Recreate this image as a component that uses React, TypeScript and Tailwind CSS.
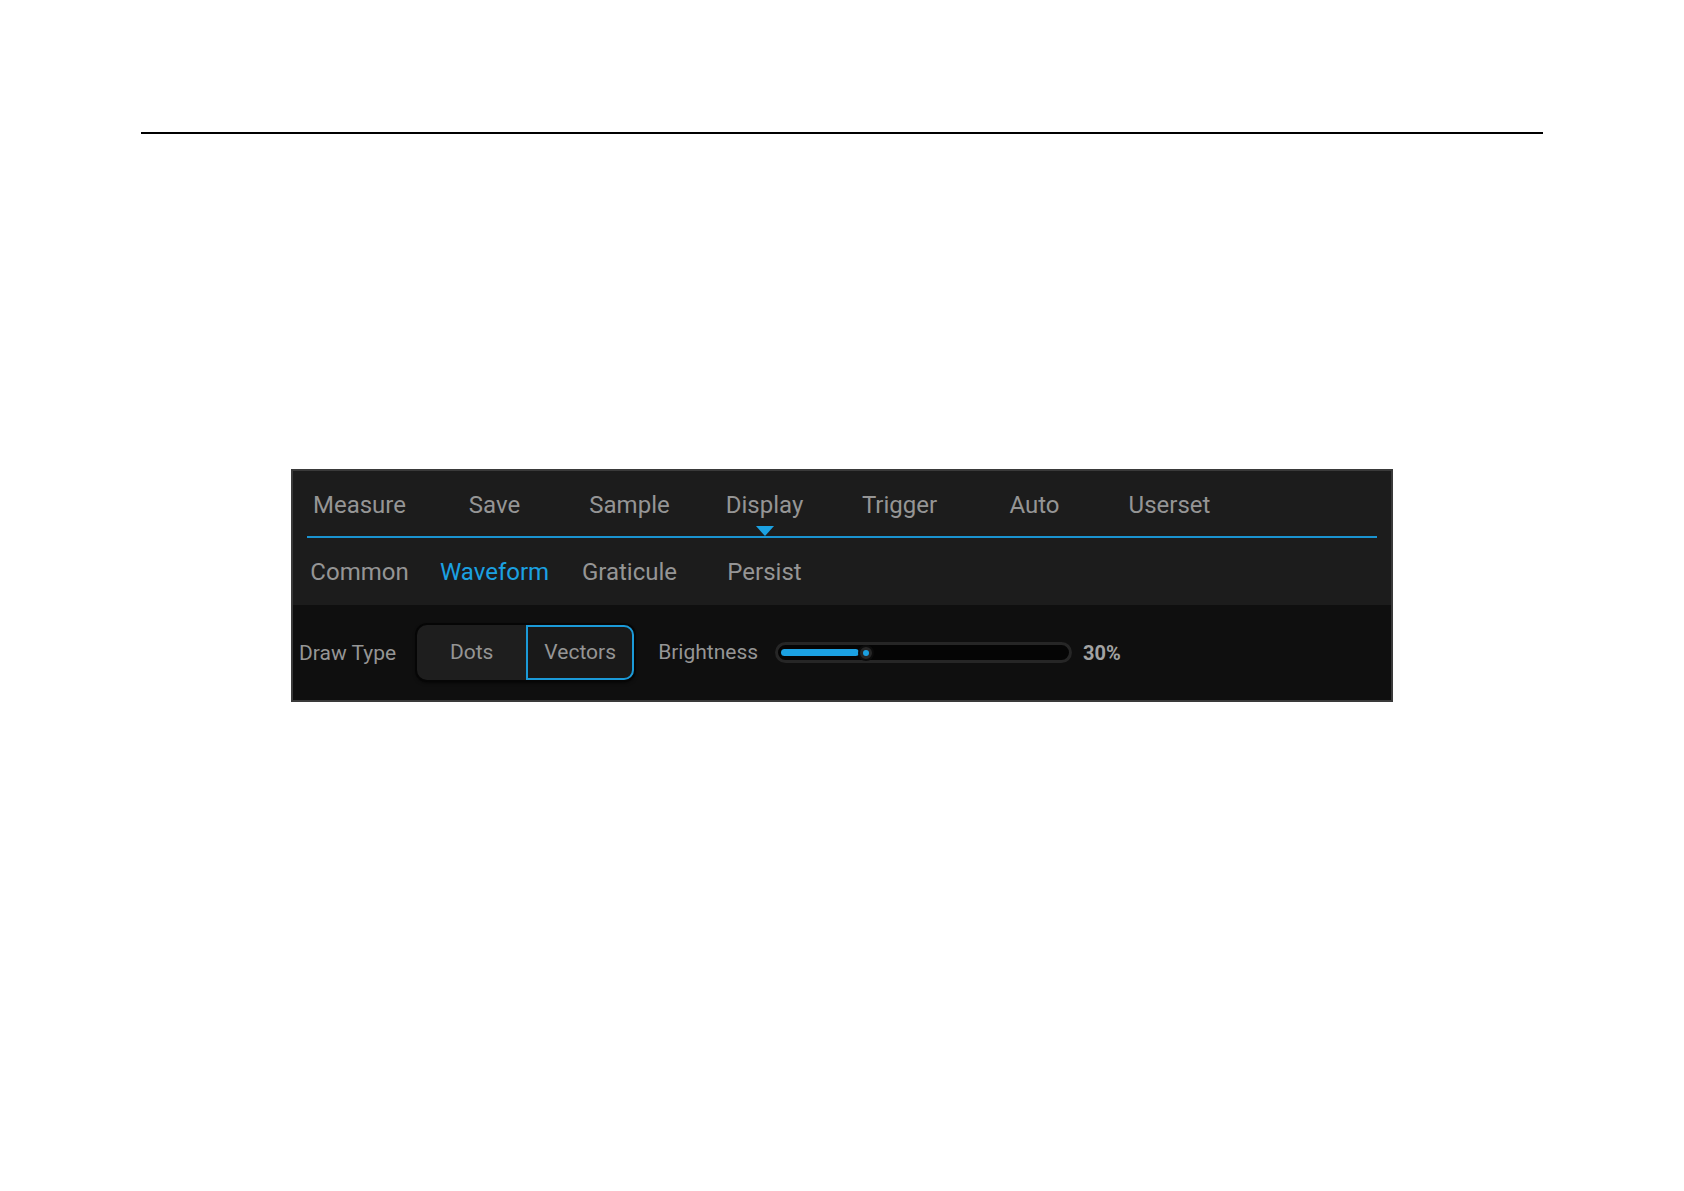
import React from 'react';

const topTabs = ['Measure', 'Save', 'Sample', 'Display', 'Trigger', 'Auto', 'Userset'];
const subTabs = ['Common', 'Waveform', 'Graticule', 'Persist'];

const font = { fontFamily: 'Roboto, "Noto Sans", sans-serif' };

export default function App() {
  return (
    <div className="w-full h-[1191px] bg-white pt-[132px]" style={font}>
      {/* page rule */}
      <div className="ml-[141px] w-[1402px] h-[2px] bg-black" />

      {/* settings panel */}
      <div className="ml-[291px] mt-[335px] w-[1102px] h-[233px] border-2 border-[#3a3a3a] bg-[#1c1c1c] flex flex-col">
        {/* main tabs */}
        <div className="grid grid-cols-[repeat(7,135px)] h-[65px] items-center -ml-[1px]">
          {topTabs.map((t) => (
            <div key={t} className="relative flex justify-center items-center h-full text-[24px] text-[#959595] pt-[2px]">
              {t}
              {t === 'Display' && (
                <div className="absolute bottom-0 left-1/2 -translate-x-1/2 w-0 h-0 border-l-[9px] border-r-[9px] border-t-[10px] border-l-transparent border-r-transparent border-t-[#1ba1e2]" />
              )}
            </div>
          ))}
        </div>
        <div className="mx-[14px] h-[2px] bg-[#1a93d0]" />

        {/* sub tabs */}
        <div className="grid grid-cols-[repeat(4,135px)] h-[67px] items-center -ml-[1px]">
          {subTabs.map((t) => (
            <div
              key={t}
              className={`flex justify-center text-[24px] ${t === 'Waveform' ? 'text-[#1ba1e2]' : 'text-[#959595]'}`}
            >
              {t}
            </div>
          ))}
        </div>

        {/* controls */}
        <div className="flex-1 bg-[#0f0f0f] flex items-center pl-[6px] text-[21px] text-[#959595]">
          <span className="pt-[2px]">Draw Type</span>
          <div className="ml-[21px] flex h-[55px] w-[217px] rounded-[10px] bg-[#1e1e1e] shadow-[0_0_0_2px_#060606,0_2px_4px_#000]">
            <div className="w-[109px] flex items-center justify-center">Dots</div>
            <div className="flex-1 flex items-center justify-center border-2 border-[#1b9ad8] rounded-r-[10px] bg-[#191919]">
              Vectors
            </div>
          </div>
          <span className="ml-[24px]">Brightness</span>
          <div className="relative ml-[17px] w-[297px] h-[21px] rounded-full bg-[#050505] border-[3px] border-[#262626] flex items-center">
            <div className="ml-[3px] w-[78px] h-[7px] rounded-full bg-[#1ba1e2]" />
            <div className="absolute left-[80px] top-1/2 -translate-y-1/2 w-[16px] h-[16px] rounded-full bg-[#262626] border-2 border-[#0c0c0c] flex items-center justify-center">
              <div className="w-[6px] h-[6px] rounded-full bg-[#1ba1e2]" />
            </div>
          </div>
          <span className="ml-[11px] font-bold text-[20px] text-[#a2a2a2]">30%</span>
        </div>
      </div>
    </div>
  );
}
